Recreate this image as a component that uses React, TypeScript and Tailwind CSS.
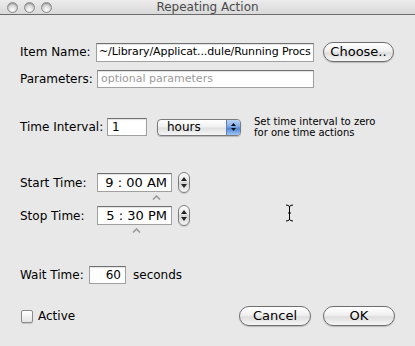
import React from "react";

const Caret = ({ className }: { className: string }) => (
  <svg className={className} width="9" height="5" viewBox="0 0 9 5">
    <path d="M1 4.5 L4.5 1 L8 4.5" fill="none" stroke="#9a9a9a" strokeWidth="1.6" />
  </svg>
);

const Stepper = () => (
  <div className="ml-[6px] w-[12px] h-[21px] rounded-[6px] border border-[#7d7d7d] bg-[linear-gradient(to_bottom,#ffffff,#e2e2e2_50%,#d4d4d4_50%,#f4f4f4)] flex flex-col items-center justify-between py-[4px] shadow-[0_1px_1px_rgba(0,0,0,0.15)]">
    <svg width="6" height="4" viewBox="0 0 6 4"><path d="M0 4 L3 0 L6 4 Z" fill="#222" /></svg>
    <svg width="6" height="4" viewBox="0 0 6 4"><path d="M0 0 L3 4 L6 0 Z" fill="#222" /></svg>
  </div>
);

const Field = ({ className, children }: { className: string; children?: React.ReactNode }) => (
  <div
    className={
      "bg-white border border-[#a0a0a0] border-t-[#707070] shadow-[inset_0_1px_1px_rgba(0,0,0,0.12)] flex items-center overflow-hidden whitespace-nowrap " +
      className
    }
  >
    {children}
  </div>
);

const Pill = ({ className, children }: { className: string; children: React.ReactNode }) => (
  <div
    className={
      "h-[20px] rounded-full border border-[#6e6e6e] bg-[linear-gradient(to_bottom,#ffffff,#f0f0f0_45%,#dedede_55%,#f6f6f6)] shadow-[0_1px_1px_rgba(0,0,0,0.2)] flex items-center justify-center text-[13px] text-black " +
      className
    }
  >
    {children}
  </div>
);

const Light = () => (
  <div className="w-[11px] h-[11px] rounded-full border border-[#8c8c8c] bg-[radial-gradient(circle_at_50%_75%,#ffffff,#d4d4d4_55%,#a6a6a6)] shadow-[inset_0_1px_1px_rgba(0,0,0,0.2)]" />
);

export default function App() {
  return (
    <div className="w-[415px] h-[346px] bg-[#e8e8e8] font-['DejaVu_Sans',sans-serif] text-[12px] text-black relative overflow-hidden">
      {/* title bar */}
      <div className="h-[15px] relative flex items-center border-b border-[#6b6b6b] bg-[linear-gradient(to_bottom,#ececec,#d9d9d9)]">
        <div className="flex gap-[6px] pl-[7px] items-center">
          <Light />
          <Light />
          <Light />
        </div>
        <div className="absolute inset-0 flex items-center justify-center text-[12px] text-[#4a4a4a] leading-none">
          Repeating Action
        </div>
      </div>

      <div className="pl-[20px] flex flex-col">
        {/* Item Name */}
        <div className="mt-[27px] h-[20px] flex items-center">
          <div className="w-[76px] whitespace-nowrap">Item Name:</div>
          <Field className="w-[218px] h-[19px] pl-[2px] text-[11px] tracking-[-0.1px]">~/Library/Applicat...dule/Running Procs</Field>
          <Pill className="ml-[9px] w-[71px]">Choose..</Pill>
        </div>

        {/* Parameters */}
        <div className="mt-[8px] h-[18px] flex items-center">
          <div className="w-[77px] whitespace-nowrap">Parameters:</div>
          <Field className="w-[217px] h-[18px] pl-[3px] text-[11px] text-[#9a9a9a]">optional parameters</Field>
        </div>

        {/* Time Interval */}
        <div className="mt-[30px] h-[18px] flex items-center">
          <div className="w-[87px] whitespace-nowrap">Time Interval:</div>
          <Field className="w-[40px] h-[18px] pl-[4px]">1</Field>
          <div className="ml-[10px] w-[84px] h-[17px] rounded-[4px] border border-[#7a7a7a] bg-[linear-gradient(to_bottom,#ffffff,#f0f0f0_45%,#e0e0e0_55%,#f6f6f6)] flex items-center overflow-hidden shadow-[0_1px_1px_rgba(0,0,0,0.2)]">
            <div className="flex-1 pl-[9px]">hours</div>
            <div className="w-[14px] h-full border-l border-[#5f7fb0] bg-[linear-gradient(to_bottom,#b9d4f5,#7fa9e4_45%,#4f86d8_55%,#9cc4f4)] flex flex-col items-center justify-center gap-[2px]">
              <svg width="5" height="3" viewBox="0 0 5 3"><path d="M0 3 L2.5 0 L5 3 Z" fill="#111" /></svg>
              <svg width="5" height="3" viewBox="0 0 5 3"><path d="M0 0 L2.5 3 L5 0 Z" fill="#111" /></svg>
            </div>
          </div>
          <div className="ml-[13px] text-[10px] leading-[11px] whitespace-nowrap">
            Set time interval to zero
            <br />
            for one time actions
          </div>
        </div>

        {/* Start Time */}
        <div className="mt-[36px] h-[21px] flex items-center">
          <div className="w-[77px] whitespace-nowrap">Start Time:</div>
          <div className="relative">
            <Field className="w-[75px] h-[19px] justify-end pr-[4px] text-[13px]">9 : 00 AM</Field>
            <Caret className="absolute left-[55px] top-[22px]" />
          </div>
          <Stepper />
        </div>

        {/* Stop Time */}
        <div className="mt-[12px] h-[21px] flex items-center">
          <div className="w-[77px] whitespace-nowrap">Stop Time:</div>
          <div className="relative">
            <Field className="w-[75px] h-[19px] justify-end pr-[4px] text-[13px]">5 : 30 PM</Field>
            <Caret className="absolute left-[35px] top-[22px]" />
          </div>
          <Stepper />
        </div>

        {/* Wait Time */}
        <div className="mt-[40px] h-[18px] flex items-center">
          <div className="w-[69px] whitespace-nowrap">Wait Time:</div>
          <Field className="w-[37px] h-[18px] justify-end pr-[4px]">60</Field>
          <div className="ml-[7px]">seconds</div>
        </div>

        {/* Active + buttons */}
        <div className="mt-[22px] h-[20px] flex items-center pr-[20px]">
          <div className="ml-[1px] w-[12px] h-[13px] border border-[#8a8a8a] rounded-[2px] bg-[linear-gradient(to_bottom,#ffffff,#e4e4e4)] shadow-[0_1px_1px_rgba(0,0,0,0.15)]" />
          <div className="ml-[5px]">Active</div>
          <Pill className="ml-auto w-[72px]">Cancel</Pill>
          <Pill className="ml-[12px] w-[72px]">OK</Pill>
        </div>
      </div>

      {/* mouse cursor */}
      <svg className="absolute left-[285px] top-[204px]" width="9" height="18" viewBox="0 0 9 18">
        <path d="M1 1 Q4.5 1 4.5 3 L4.5 15 Q4.5 17 1 17 M8 1 Q4.5 1 4.5 3 M4.5 15 Q4.5 17 8 17 M3 9 L6 9" fill="none" stroke="#000" strokeWidth="1" />
      </svg>
    </div>
  );
}
